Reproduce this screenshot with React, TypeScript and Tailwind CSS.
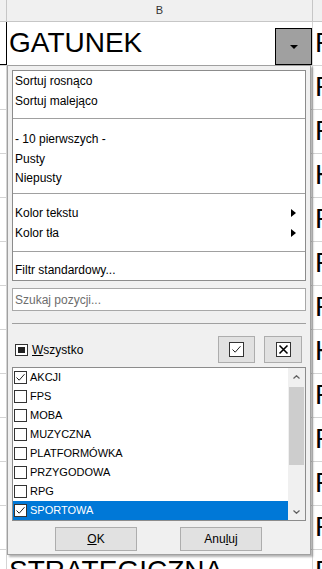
import React from 'react';

// column B rows 2-12 sit under the popup, so only the visible ones get text
const colB = ['GATUNEK', '', '', '', '', '', '', '', '', '', '', '', 'STRATEGICZNA'];
const colC = ['PRODUCENT', 'PC', 'PC', 'HYBRYDA', 'PC', 'PC', 'PC', 'HYBRYDA', 'PC', 'PC', 'PC', 'PC', 'PC'];

const genres = [
  { name: 'AKCJI', checked: true },
  { name: 'FPS', checked: false },
  { name: 'MOBA', checked: false },
  { name: 'MUZYCZNA', checked: false },
  { name: 'PLATFORMÓWKA', checked: false },
  { name: 'PRZYGODOWA', checked: false },
  { name: 'RPG', checked: false },
  { name: 'SPORTOWA', checked: true, selected: true },
];

const Check = () => (
  <svg width="11" height="11" viewBox="0 0 11 11" className="block">
    <path d="M1.5 5.5 L4.2 8.2 L9.5 2.2" fill="none" stroke="#222" strokeWidth="1" />
  </svg>
);

const Arrow = () => (
  <svg width="5" height="8" viewBox="0 0 5 8" className="block">
    <path d="M0 0 L5 4 L0 8 Z" fill="#000" />
  </svg>
);

const Item = ({ label, h = 'h-[20px]', mt = '', arrow = false }: { label: string; h?: string; mt?: string; arrow?: boolean }) => (
  <div className={`${h} ${mt} flex items-center justify-between pl-[2px] pr-[9px]`}>
    <span>{label}</span>
    {arrow && <Arrow />}
  </div>
);

export default function App() {
  return (
    <div className="relative w-[322px] h-[569px] overflow-hidden bg-white font-['Liberation_Sans',Arial,sans-serif] text-black">
      {/* column header */}
      <div className="flex h-[22px] bg-[#f0f0f0] border-b border-[#c6c6c6]">
        <div className="w-[7px] border-r border-[#c6c6c6]" />
        <div className="w-[306px] border-r border-[#c6c6c6] flex items-center justify-center text-[11px] text-[#333]">B</div>
        <div className="flex-1" />
      </div>

      {/* rows */}
      {colB.map((txt, i) => (
        <div key={i} className="flex h-[44px] border-b border-[#d4d4d4]">
          {i === 0 ? (
            <div className="w-[7px] border-r border-b border-black" />
          ) : (
            <div className="w-[7px] border-r border-[#d4d4d4]" />
          )}
          <div className="relative w-[306px] border-r border-[#d4d4d4] pl-[2px] pt-[7px] text-[28px] leading-none whitespace-nowrap">
            {txt}
            {i === 0 && (
              <div className="absolute right-0 top-[6px] w-[37px] h-[37px] bg-[#a0a0a0] border border-black flex items-center justify-center">
                <svg width="8" height="4" viewBox="0 0 8 4" className="block">
                  <path d="M0 0 L8 0 L4 4 Z" fill="#000" />
                </svg>
              </div>
            )}
          </div>
          <div className="flex-1 overflow-hidden pl-[2px] pt-[7px] text-[28px] leading-none whitespace-nowrap">{colC[i]}</div>
        </div>
      ))}

      {/* autofilter popup */}
      <div className="absolute left-[7px] top-[65px] w-[304px] bg-[#f0f0f0] border border-[#a0a0a0] shadow-[2px_2px_2px_rgba(0,0,0,0.3)] px-[4px] pt-[4px] pb-[3px] text-[12px]">
        {/* menu */}
        <div className="border border-[#8c8c8c] bg-white flex flex-col">
          <Item label="Sortuj rosnąco" />
          <Item label="Sortuj malejąco" />
          <div className="mt-[7px] h-px bg-[#a0a0a0]" />
          <Item label="- 10 pierwszych -" mt="mt-[10px]" />
          <Item label="Pusty" h="h-[19px]" />
          <Item label="Niepusty" h="h-[19px]" />
          <div className="mt-[6px] h-px bg-[#a0a0a0]" />
          <Item label="Kolor tekstu" mt="mt-[9px]" arrow />
          <Item label="Kolor tła" arrow />
          <div className="mt-[8px] h-px bg-[#a0a0a0]" />
          <Item label="Filtr standardowy..." mt="mt-[8px]" />
        </div>

        {/* search */}
        <div className="mt-[7px] h-[23px] border border-[#a8a8a8] bg-white flex items-center pl-[2px] text-[#6d6d6d]">
          Szukaj pozycji...
        </div>
        <div className="mt-[12px] h-px bg-[#a0a0a0]" />

        {/* all + toggles */}
        <div className="mt-[12px] h-[27px] flex items-center">
          <div className="ml-[3px] w-[13px] h-[12px] border border-[#333] bg-white flex items-center justify-center">
            <div className="w-[7px] h-[6px] bg-[#222]" />
          </div>
          <span className="ml-[4px]">
            <span className="underline">W</span>szystko
          </span>
          <div className="ml-auto flex gap-[9px] pr-[4px]">
            <div className="w-[37px] h-[27px] bg-[#e1e1e1] border border-[#adadad] flex items-center justify-center">
              <div className="w-[15px] h-[15px] border border-[#333] bg-white flex items-center justify-center">
                <Check />
              </div>
            </div>
            <div className="w-[38px] h-[27px] bg-[#e1e1e1] border border-[#adadad] flex items-center justify-center">
              <div className="w-[15px] h-[15px] border border-[#333] bg-white flex items-center justify-center">
                <svg width="11" height="11" viewBox="0 0 11 11" className="block">
                  <path d="M1.5 1.5 L9.5 9.5 M9.5 1.5 L1.5 9.5" stroke="#000" strokeWidth="1.6" />
                </svg>
              </div>
            </div>
          </div>
        </div>

        {/* list */}
        <div className="mt-[4px] h-[154px] border border-[#8c8c8c] bg-white flex">
          <div className="flex-1 flex flex-col text-[11px]">
            {genres.map((g) => (
              <div
                key={g.name}
                className={`h-[19px] flex items-center pl-[1px] ${g.selected ? 'bg-[#0078d7] text-white' : ''}`}
              >
                <div className="w-[13px] h-[13px] border border-[#333] bg-white flex items-center justify-center">
                  {g.checked && <Check />}
                </div>
                <span className="ml-[3px]">{g.name}</span>
              </div>
            ))}
          </div>
          <div className="w-[17px] bg-[#f0f0f0] flex flex-col items-center">
            <div className="h-[17px] flex items-center justify-center">
              <svg width="7" height="4" viewBox="0 0 7 4" className="block">
                <path d="M0.5 3.5 L3.5 0.7 L6.5 3.5" fill="none" stroke="#606060" strokeWidth="1.2" />
              </svg>
            </div>
            <div className="mt-[2px] w-[15px] h-[78px] bg-[#cdcdcd]" />
            <div className="mt-auto h-[17px] flex items-center justify-center">
              <svg width="7" height="4" viewBox="0 0 7 4" className="block">
                <path d="M0.5 0.5 L3.5 3.3 L6.5 0.5" fill="none" stroke="#606060" strokeWidth="1.2" />
              </svg>
            </div>
          </div>
        </div>

        {/* buttons */}
        <div className="mt-[6px] flex pl-[43px] gap-[43px]">
          <div className="w-[82px] h-[24px] bg-[#e1e1e1] border border-[#adadad] flex items-center justify-center">
            <span>
              <span className="underline">O</span>K
            </span>
          </div>
          <div className="w-[82px] h-[24px] bg-[#e1e1e1] border border-[#adadad] flex items-center justify-center">
            <span>
              Anu<span className="underline">l</span>uj
            </span>
          </div>
        </div>
      </div>
    </div>
  );
}
